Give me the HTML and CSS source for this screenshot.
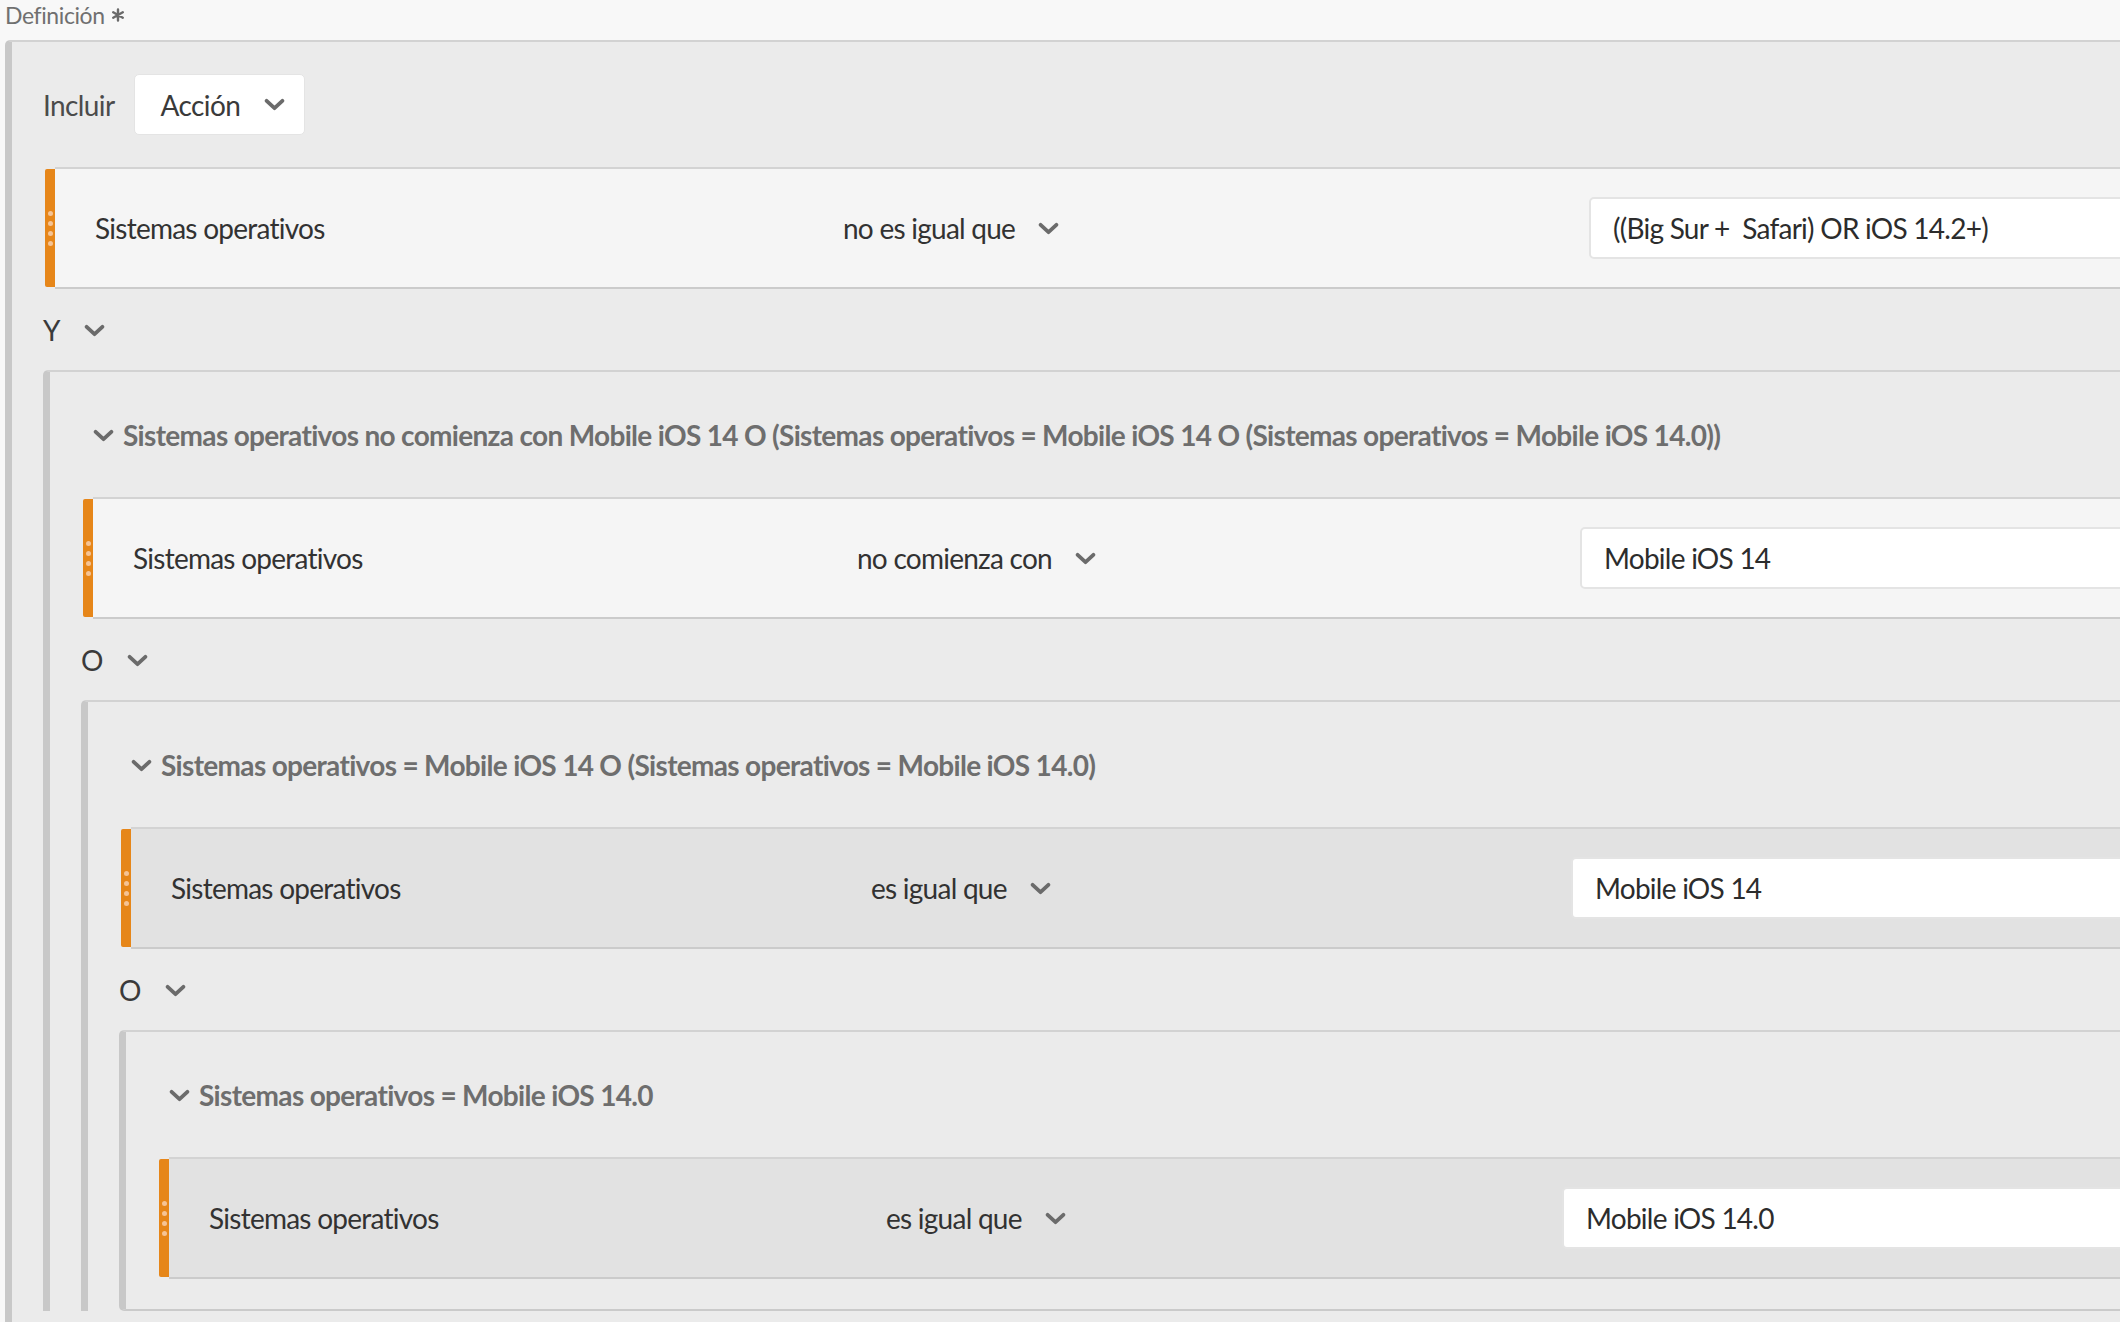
FILE: index.html
```html
<!DOCTYPE html>
<html lang="es">
<head>
<meta charset="utf-8">
<title>Definición</title>
<link rel="stylesheet" href="styles.css">
</head>
<body>
<div class="page">
  <div class="field-label">Definición <svg class="req" viewBox="0 0 14 14" aria-label="*"><path d="M7 1.5 V12.5 M2.2 4.25 L11.8 9.75 M2.2 9.75 L11.8 4.25"/></svg></div>

  <div class="group group--root">
    <div class="include-bar">
      <span class="include-label">Incluir</span>
      <div class="picker">
        <span>Acción</span>
        <svg class="chev" viewBox="0 0 20 12"><path d="M2.5 2.5 L10 9.5 L17.5 2.5"/></svg>
      </div>
    </div>

    <div class="rule rule--d0">
      <div class="rule-handle"><i></i><i></i><i></i><i></i></div>
      <div class="rule-body">
        <div class="rule-name">Sistemas operativos</div>
        <div class="rule-op"><span>no es igual que</span><svg class="chev" viewBox="0 0 20 12"><path d="M2.5 2.5 L10 9.5 L17.5 2.5"/></svg></div>
        <div class="rule-value">((Big Sur +&nbsp; Safari) OR iOS 14.2+)</div>
      </div>
    </div>

    <div class="logic"><span>Y</span><svg class="chev" viewBox="0 0 20 12"><path d="M2.5 2.5 L10 9.5 L17.5 2.5"/></svg></div>

    <div class="group">
      <div class="group-title"><svg class="chev" viewBox="0 0 20 12"><path d="M2.5 2.5 L10 9.5 L17.5 2.5"/></svg><span>Sistemas operativos no comienza con Mobile iOS 14 O (Sistemas operativos = Mobile iOS 14 O (Sistemas operativos = Mobile iOS 14.0))</span></div>

      <div class="rule rule--d1">
        <div class="rule-handle"><i></i><i></i><i></i><i></i></div>
        <div class="rule-body">
          <div class="rule-name">Sistemas operativos</div>
          <div class="rule-op"><span>no comienza con</span><svg class="chev" viewBox="0 0 20 12"><path d="M2.5 2.5 L10 9.5 L17.5 2.5"/></svg></div>
          <div class="rule-value">Mobile iOS 14</div>
        </div>
      </div>

      <div class="logic"><span>O</span><svg class="chev" viewBox="0 0 20 12"><path d="M2.5 2.5 L10 9.5 L17.5 2.5"/></svg></div>

      <div class="group">
        <div class="group-title"><svg class="chev" viewBox="0 0 20 12"><path d="M2.5 2.5 L10 9.5 L17.5 2.5"/></svg><span>Sistemas operativos = Mobile iOS 14 O (Sistemas operativos = Mobile iOS 14.0)</span></div>

        <div class="rule rule--d2 rule--active">
          <div class="rule-handle"><i></i><i></i><i></i><i></i></div>
          <div class="rule-body">
            <div class="rule-name">Sistemas operativos</div>
            <div class="rule-op"><span>es igual que</span><svg class="chev" viewBox="0 0 20 12"><path d="M2.5 2.5 L10 9.5 L17.5 2.5"/></svg></div>
            <div class="rule-value">Mobile iOS 14</div>
          </div>
        </div>

        <div class="logic"><span>O</span><svg class="chev" viewBox="0 0 20 12"><path d="M2.5 2.5 L10 9.5 L17.5 2.5"/></svg></div>

        <div class="group group--closed">
          <div class="group-title"><svg class="chev" viewBox="0 0 20 12"><path d="M2.5 2.5 L10 9.5 L17.5 2.5"/></svg><span>Sistemas operativos = Mobile iOS 14.0</span></div>

          <div class="rule rule--d3 rule--active">
            <div class="rule-handle"><i></i><i></i><i></i><i></i></div>
            <div class="rule-body">
              <div class="rule-name">Sistemas operativos</div>
              <div class="rule-op"><span>es igual que</span><svg class="chev" viewBox="0 0 20 12"><path d="M2.5 2.5 L10 9.5 L17.5 2.5"/></svg></div>
              <div class="rule-value">Mobile iOS 14.0</div>
            </div>
          </div>
        </div>
      </div>
    </div>
  </div>
</div>
</body>
</html>
```

FILE: styles.css
```css
html, body {
  margin: 0;
  padding: 0;
}
body {
  width: 2120px;
  height: 1322px;
  overflow: hidden;
  background: #f8f8f8;
  font-family: Lato, "Open Sans", sans-serif;
  color: #2f2f2f;
}
.page {
  width: 2500px;
  padding-left: 5px;
}
.field-label {
  display: flex;
  align-items: center;
  gap: 6px;
  height: 30px;
  line-height: 30px;
  font-size: 23px;
  color: #707070;
  letter-spacing: -0.4px;
}
.req {
  width: 14px;
  height: 14px;
  flex: none;
}
.req path {
  fill: none;
  stroke: #6a6a6a;
  stroke-width: 2.4;
  stroke-linecap: round;
}
.group {
  background: #ebebeb;
  border-left: 7px solid #c8c8c8;
  border-top: 2px solid #d2d2d2;
  border-radius: 5px 0 0 0;
  padding: 0 31px 0 31px;
}
.group--root {
  margin-top: 10px;
  min-height: 1400px;
}
.group--closed {
  border-bottom: 2px solid #cacaca;
  border-radius: 5px 0 0 5px;
  padding-bottom: 30px;
}
.chev {
  width: 21px;
  height: 13px;
  flex: none;
}
.chev path {
  fill: none;
  stroke: #6b6b6b;
  stroke-width: 3.6;
  stroke-linecap: round;
  stroke-linejoin: round;
}
.include-bar {
  display: flex;
  align-items: center;
  gap: 19px;
  padding-top: 32px;
  margin-bottom: 32px;
  font-size: 28px;
  letter-spacing: -0.6px;
}
.include-label {
  color: #4b4b4b;
}
.picker {
  width: 171px;
  height: 61px;
  box-sizing: border-box;
  display: flex;
  align-items: center;
  gap: 24px;
  padding: 0 0 0 26px;
  background: #fff;
  border: 1px solid #e4e4e4;
  border-radius: 5px;
  color: #3a3a3a;
}
.rule {
  display: flex;
  height: 122px;
  margin-left: 2px;
  font-size: 28px;
  letter-spacing: -0.75px;
}
.rule-handle {
  width: 10px;
  flex: none;
  margin: 2px 0;
  background: #e68619;
  border-radius: 2px 0 0 2px;
  display: flex;
  flex-direction: column;
  justify-content: center;
  align-items: center;
  gap: 5px;
}
.rule-handle i {
  width: 5px;
  height: 5px;
  border-radius: 50%;
  background: #f5c394;
}
.rule-body {
  flex: 1;
  display: flex;
  align-items: center;
  padding-left: 40px;
  background: #f5f5f5;
  border-top: 2px solid #d3d3d3;
  border-bottom: 2px solid #cbcbcb;
}
.rule--active .rule-body {
  background: #e2e2e2;
}
.rule-name {
  flex: none;
  width: var(--name-w);
  color: #323232;
}
.rule-op {
  flex: none;
  width: var(--op-w);
  display: flex;
  align-items: center;
  gap: 23px;
  color: #323232;
}
.rule-value {
  flex: 1;
  height: 62px;
  box-sizing: border-box;
  display: flex;
  align-items: center;
  padding-left: 22px;
  margin-right: 40px;
  background: #fff;
  border: 2px solid #e4e4e4;
  border-radius: 5px;
  color: #2c2c2c;
}
.rule--d0 { --name-w: 748px; --op-w: 746px; }
.rule--d1 { --name-w: 724px; --op-w: 723px; }
.rule--d2 { --name-w: 700px; --op-w: 700px; }
.rule--d3 { --name-w: 677px; --op-w: 676px; }

.logic {
  display: flex;
  align-items: center;
  gap: 24px;
  height: 42px;
  padding: 20px 0 19px;
  font-size: 28px;
  color: #3a3a3a;
}
.group-title {
  display: flex;
  align-items: center;
  gap: 9px;
  height: 40px;
  padding: 43px 0 0 12px;
  margin-bottom: 42px;
  font-size: 28px;
  font-weight: 700;
  letter-spacing: -0.68px;
  color: #6e6e6e;
  white-space: nowrap;
}
```
